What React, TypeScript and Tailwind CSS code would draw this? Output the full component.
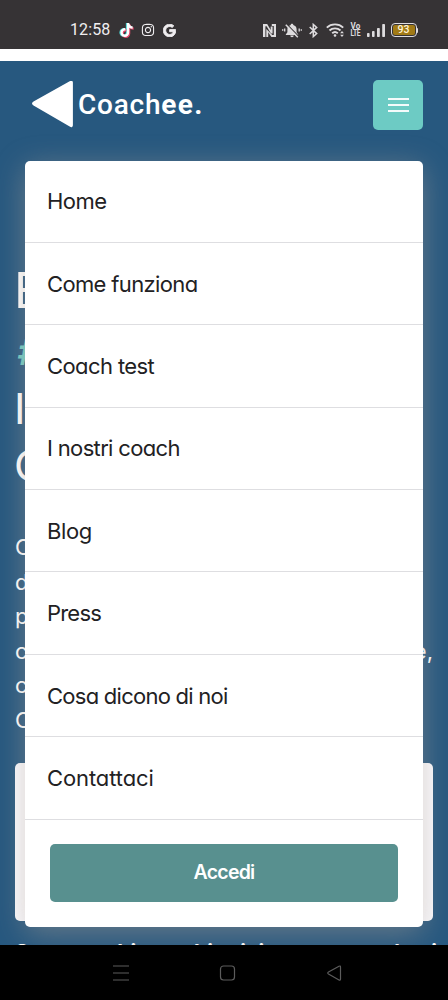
import { FaTiktok, FaInstagram, FaGoogle } from "react-icons/fa6";

const menuItems = [
  { label: "Home", spacing: "tracking-[-0.5px]" },
  { label: "Come funziona", spacing: "tracking-[-0.64px]" },
  { label: "Coach test", spacing: "tracking-[-0.6px]" },
  { label: "I nostri coach", spacing: "tracking-[-0.66px]" },
  { label: "Blog", spacing: "tracking-[-0.4px]" },
  { label: "Press", spacing: "tracking-[-0.8px]" },
  { label: "Cosa dicono di noi", spacing: "tracking-[-0.74px]" },
  { label: "Contattaci", spacing: "tracking-[-0.1px]" },
];

function TikTok() {
  return (
    <span className="relative block h-[14px] w-[13px]">
      <FaTiktok className="absolute top-0 left-[-0.6px] h-[14px] w-[13px] text-[#4fd8d8]" />
      <FaTiktok className="absolute top-[0.5px] left-[0.7px] h-[14px] w-[13px] text-[#e0476a]" />
      <FaTiktok className="absolute top-0 left-0 h-[14px] w-[13px] text-white" />
    </span>
  );
}

function Nfc() {
  return (
    <svg className="h-[13px] w-[13px]" viewBox="0 0 13 13" fill="#dedcde">
      <path d="M0 0H4.200L7.700 6V2.500H9.600V9.500H7.900L3.600 2.300H2.400V13H0Z" />
      <path d="M8.800 0H13V13H8.400L5.200 8.200V13H3.300V5L9.300 11H10.800V2H8.800Z" />
    </svg>
  );
}

function BellOff() {
  return (
    <svg className="h-[15px] w-[20px]" viewBox="0 0 20 15">
      <path d="M10 .8c.8 0 1.300.5 1.300 1.200 2.100.6 3.300 2.200 3.300 4.300v3l1.600 2.200v.5H3.800v-.5l1.600-2.200v-3C5.400 4.200 6.600 2.600 8.700 2 8.700 1.300 9.200.8 10 .8ZM8.300 12.600h3.400c0 1-.7 1.700-1.700 1.700s-1.700-.7-1.700-1.700Z" fill="#dedcde" />
      <path d="M4.900 1.300 17 13.600" stroke="#363335" strokeWidth="1.200" />
      <path d="M3.800 1.800 15.800 14.200" stroke="#dedcde" strokeWidth="1.500" />
      <path d="M2.700 5.500v3M.7 6.300v1.400M17.200 5.500v3M19.300 6.300v1.400" stroke="#dedcde" strokeWidth="1.300" />
    </svg>
  );
}

function Bluetooth() {
  return (
    <svg className="h-[15px] w-[9px]" viewBox="0 0 9 15" fill="none" stroke="#dedcde" strokeWidth="1.500">
      <path d="m.7 4 7 6.600-3.400 3V1.400l3.400 3-7 6.600" />
    </svg>
  );
}

function Wifi() {
  return (
    <svg className="h-[14px] w-[19px]" viewBox="0 0 19 14" fill="none" stroke="#dedcde" strokeWidth="1.900">
      <path d="M.8 4.600c4.500-4.300 11.900-4.300 16.400 0M3.500 7.500c3-2.900 8-2.900 11 0M6.200 10.200c1.600-1.500 4-1.500 5.600 0" />
      <circle cx="9" cy="12.500" r="1.300" fill="#dedcde" stroke="none" />
      <path d="m16 8 1.900 2.300h-3.800ZM16 14l1.900-2.300h-3.800Z" fill="#dedcde" stroke="none" />
    </svg>
  );
}

function Signal() {
  return (
    <svg className="h-[13px] w-[18px]" viewBox="0 0 18 13" fill="#dedcde">
      <rect x="0" y="9" width="2.600" height="4" rx=".8" />
      <rect x="5" y="7" width="2.600" height="6" rx=".8" />
      <rect x="10" y="4" width="2.800" height="9" rx=".8" />
      <rect x="15.200" y="0" width="2.800" height="13" rx=".8" />
    </svg>
  );
}

function StatusBar() {
  return (
    <div className="flex h-[48.500px] shrink-0 items-center justify-between bg-[#363335] pt-3 pr-[30px] pl-[70px] text-[#f0eef0]">
      <div className="flex items-center">
        <span className="w-[50px] font-['Roboto',sans-serif] text-[16px] leading-none tracking-[0.1px]">12:58</span>
        <TikTok />
        <FaInstagram className="ml-[8px] h-[14px] w-[14px]" />
        <FaGoogle className="ml-[8px] h-[13px] w-[13px] stroke-current stroke-[36px]" />
      </div>
      <div className="flex items-center">
        <Nfc />
        <span className="ml-[6px]"><BellOff /></span>
        <span className="ml-[7px]"><Bluetooth /></span>
        <span className="ml-[8px]"><Wifi /></span>
        <span className="ml-[5px] flex w-[11px] flex-col items-center font-['Roboto',sans-serif] text-[9px] leading-[7px] font-bold text-[#dedcde]">
          <span className="scale-x-90">Vo</span>
          <span className="scale-x-75 tracking-[-0.6px]">LTE</span>
        </span>
        <span className="ml-[6px]"><Signal /></span>
        <span className="ml-[6px] flex h-[14px] w-[26px] rounded-[4px] border border-[#dedcde] p-px">
          <span className="flex w-full items-center justify-center rounded-[2px] bg-[#a17a15] font-['Roboto',sans-serif] text-[10.500px] leading-none font-medium text-[#fff3d5]">
            93
          </span>
        </span>
        <span className="h-[5px] w-[1.500px] rounded-r bg-[#dedcde]" />
      </div>
    </div>
  );
}

function Header() {
  return (
    <header className="flex h-[87px] items-center justify-between pr-[25px] pl-8">
      <div className="flex items-center">
        <svg className="h-[48px] w-[42px]" viewBox="0 0 42 48">
          <path d="M2 21.400 38.600.9Q39.900.2 39.900 1.600V44.200Q39.900 45.600 38.600 44.900L2 23.600Q0 22.500 2 21.400Z" fill="#fff" stroke="#fff" strokeWidth="2" strokeLinejoin="round" />
        </svg>
        <span className="ml-[4px] font-['Roboto',sans-serif] text-[28px] leading-none font-medium tracking-[0.75px] text-white">
          Coach<span className="font-bold tracking-[1.400px]">ee.</span>
        </span>
      </div>
      <button className="flex h-[50px] w-[50px] flex-col items-center justify-center gap-[4px] rounded-[5px] bg-[#6dcbc4]">
        <span className="h-[2px] w-[21px] bg-[#f4fbfb]" />
        <span className="h-[2px] w-[21px] bg-[#f4fbfb]" />
        <span className="h-[2px] w-[21px] bg-[#f4fbfb]" />
      </button>
    </header>
  );
}

function Menu() {
  return (
    <nav className="absolute top-[160.500px] right-[25px] left-[25px] flex h-[766px] flex-col rounded-[5px] bg-white shadow-[0_6px_30px_rgba(175,160,150,0.48)]">
      {menuItems.map((item) => (
        <a key={item.label} className="flex h-[82.400px] items-center border-b border-[#dedee1] px-[22px] text-[22px] leading-none text-[#222123]">
          <span className={item.spacing}>{item.label}</span>
        </a>
      ))}
      <button className="mx-[25px] mt-[24.500px] h-[57.500px] rounded-[5px] bg-[#58908f] text-[19.500px] font-semibold tracking-[-0.75px] text-white">
        Accedi
      </button>
    </nav>
  );
}

export default function App() {
  return (
    <div className="relative flex h-[1000px] w-[448px] flex-col overflow-hidden bg-white font-['Inter','Lato',sans-serif] [font-feature-settings:'cv11']">
      <StatusBar />
      <main className="mt-[12.500px] h-[884px] shrink-0 overflow-hidden bg-[#27587f]">
        <Header />
        <div className="px-[15px] whitespace-nowrap text-white">
          <h1 className="pt-[114px] font-['Inter',sans-serif] text-[43px] leading-[57.500px]">
            <span className="-ml-px block h-[62px] text-[49.500px]">E</span>
            <span className="ml-[2px] block h-[55.500px] text-[36px] font-semibold text-[#6dcbc4] italic">#</span>
            <span className="-ml-px block">I</span>
            <span className="-ml-px block">C</span>
          </h1>
          <div className="pt-[35.500px] text-[22px] leading-[34.600px]">
            <p>C</p>
            <p>d</p>
            <p>p</p>
            <p className="flex justify-between"><span>c</span><span>e,</span></p>
            <p>c</p>
            <p>C</p>
          </div>
          <div className="mt-[25px] h-[158.500px] rounded-[5px] bg-[#fbfbfe]" />
          <p className="mt-[17px] text-[21px] leading-[30px] font-bold">Sono cambiato, obiettivi con un coach: si</p>
        </div>
      </main>
      <footer className="relative z-10 flex h-[55px] shrink-0 items-center justify-center bg-black pl-2">
        <svg className="h-[20px] w-[232px]" viewBox="0 0 232 20" fill="none" stroke="#5c5c5c" strokeWidth="1.200">
          <path d="M1 3h16M1 10h16M1 17h16" />
          <rect x="108.500" y="3" width="14" height="14" rx="3" />
          <path d="M216.500 9 227 3.200q1.500-.7 1.500 1V16q0 1.700-1.500 1L216.500 11q-1.500-1 0-2Z" />
        </svg>
      </footer>
      <Menu />
    </div>
  );
}
